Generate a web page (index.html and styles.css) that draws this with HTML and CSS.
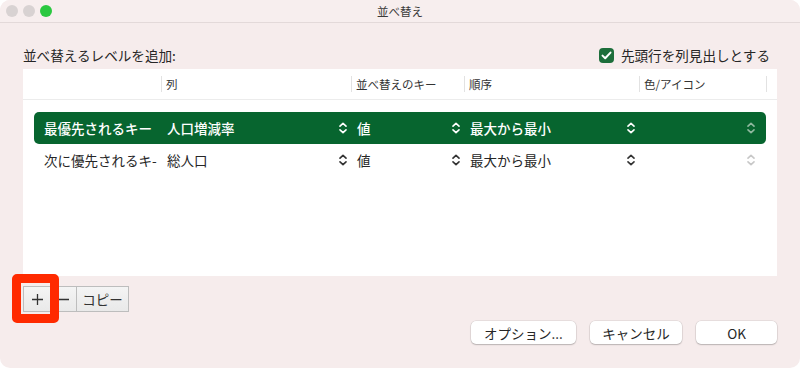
FILE: index.html
```html
<!DOCTYPE html>
<html lang="ja">
<head>
  <meta charset="UTF-8">
  <title>並べ替え</title>
  <link rel="stylesheet" href="styles.css">
</head>
<body>
  <div class="window">
    <div class="titlebar">
      <div class="lights">
        <span class="light"></span>
        <span class="light"></span>
        <span class="light green"></span>
      </div>
      <div class="title">並べ替え</div>
    </div>

    <div class="content">
      <div class="top-line">
        <span>並べ替えるレベルを追加:</span>
        <label class="check">
          <span class="box">
            <svg width="11" height="9" viewBox="0 0 11 9"><path d="M1.5 4.6 L4.2 7.2 L9.5 1.6" fill="none" stroke="#fff" stroke-width="2" stroke-linecap="round" stroke-linejoin="round"/></svg>
          </span>
          先頭行を列見出しとする
        </label>
      </div>

      <div class="panel">
        <div class="head">
          <div class="hcell first"></div>
          <div class="hcell">列</div>
          <div class="hcell">並べ替えのキー</div>
          <div class="hcell">順序</div>
          <div class="hcell">色/アイコン</div>
          <div class="hcell last"></div>
        </div>

        <div class="rows">
          <div class="row selected">
            <div class="cell label">最優先されるキー</div>
            <div class="cell">人口増減率<span class="chev"></span></div>
            <div class="cell">値<span class="chev"></span></div>
            <div class="cell">最大から最小<span class="chev"></span></div>
            <div class="cell color"><span class="chev faded"></span></div>
          </div>
          <div class="row">
            <div class="cell label">次に優先されるキ-</div>
            <div class="cell">総人口<span class="chev"></span></div>
            <div class="cell">値<span class="chev"></span></div>
            <div class="cell">最大から最小<span class="chev"></span></div>
            <div class="cell color"><span class="chev faded"></span></div>
          </div>
        </div>
      </div>

      <div class="tools">
        <button class="tool plus" aria-label="+">
          <svg width="13" height="13" viewBox="0 0 13 13"><path d="M6.5 1 V12 M1 6.5 H12" stroke="#333" stroke-width="1.3"/></svg>
        </button>
        <button class="tool minus" aria-label="−">
          <svg width="12" height="13" viewBox="0 0 12 13"><path d="M1 6.5 H11" stroke="#333" stroke-width="1.3"/></svg>
        </button>
        <button class="tool copy">コピー</button>
        <span class="highlight"></span>
      </div>

      <div class="actions">
        <button class="btn">オプション...</button>
        <button class="btn">キャンセル</button>
        <button class="btn ok">OK</button>
      </div>
    </div>
  </div>

  <script>
    // 上下シェブロンを各セルに描く
    document.querySelectorAll('.chev').forEach(function (el) {
      el.innerHTML = '<svg width="8" height="12" viewBox="0 0 8 12"><path d="M1 4.2 L4 1.3 L7 4.2 M1 7.8 L4 10.7 L7 7.8" fill="none" stroke="currentColor" stroke-width="1.6" stroke-linecap="round" stroke-linejoin="round"/></svg>';
    });
  </script>
</body>
</html>
```

FILE: styles.css
```css
:root {
  --win-bg: #f6ecec;
  --title-bg: #f7eeee;
  --green: #07652f;
  --text: #262626;
  --font: "Noto Sans CJK JP", "Noto Sans", "Liberation Sans", sans-serif;
}

html, body {
  margin: 0;
  padding: 0;
  background: #ffffff;
}

body {
  font-family: var(--font);
  color: var(--text);
  font-size: 13.5px;
}

.window {
  width: 800px;
  height: 368px;
  background: var(--win-bg);
  border-radius: 10px;
  overflow: hidden;
  position: relative;
}

.titlebar {
  height: 22px;
  background: var(--title-bg);
  border-bottom: 1px solid #e3d9d9;
  display: flex;
  align-items: center;
  position: relative;
}

.lights {
  display: flex;
  gap: 5px;
  padding-left: 6px;
}

.light {
  width: 12px;
  height: 12px;
  border-radius: 50%;
  background: #d8d2d2;
}

.light.green {
  background: #2bc840;
}

.title {
  position: absolute;
  left: 0;
  right: 0;
  text-align: center;
  font-size: 11.5px;
  color: #3a3a3a;
  line-height: 22px;
}

.content {
  padding: 21px 23px 0 23px;
}

.top-line {
  display: flex;
  justify-content: space-between;
  align-items: center;
  height: 22px;
  padding-right: 7px;
  font-size: 13.6px;
}

.check {
  display: flex;
  align-items: center;
  gap: 7px;
}

.box {
  width: 15px;
  height: 15px;
  border-radius: 4px;
  background: #1d6e3b;
  display: flex;
  align-items: center;
  justify-content: center;
}

.panel {
  margin-top: 3px;
  background: #ffffff;
  height: 207px;
}

.head {
  display: grid;
  grid-template-columns: 138px 190px 113px 175px 127px 1fr;
  height: 30px;
  border-bottom: 1px solid #ececec;
  font-size: 11.5px;
  color: #333;
}

.hcell {
  display: flex;
  align-items: center;
  padding-left: 4px;
  margin: 7px 0;
  border-left: 1px solid #e2e2e2;
}

.hcell.first {
  border-left: none;
}

.rows {
  padding: 12px 11px 0 11px;
}

.row {
  display: grid;
  grid-template-columns: 127px 190px 113px 175px 127px;
  height: 32px;
  align-items: center;
  border-radius: 5px;
}

.row.selected {
  background: var(--green);
  color: #ffffff;
  font-weight: 500;
}

.cell {
  display: flex;
  align-items: center;
  justify-content: space-between;
  padding: 0 4px 0 6px;
  white-space: nowrap;
}

.cell.label {
  padding-left: 10px;
}

.cell.color {
  justify-content: flex-end;
  padding-right: 11px;
}

.chev {
  display: flex;
  color: #333;
}

.row.selected .chev {
  color: #ffffff;
}

.row .chev.faded {
  color: #c8c8c8;
}

.row.selected .chev.faded {
  color: #8fb89e;
}

.tools {
  display: flex;
  margin-top: 10px;
  position: relative;
}

.tool {
  height: 26px;
  border: 1px solid #bdbdbd;
  background: linear-gradient(#f4f4f4, #e9e9e9);
  font-family: var(--font);
  font-size: 13.5px;
  color: #333;
  padding: 0;
  margin: 0 -1px 0 0;
  display: flex;
  align-items: center;
  justify-content: center;
}

.tool.plus {
  width: 28px;
}

.tool.minus {
  width: 27px;
}

.tool.copy {
  width: 53px;
}

.highlight {
  position: absolute;
  left: -11px;
  top: -12px;
  width: 29px;
  height: 31px;
  border: 9px solid #ff2a00;
  border-radius: 5px;
}

.actions {
  display: flex;
  justify-content: flex-end;
  gap: 14px;
  margin-top: 9px;
}

.btn {
  height: 23px;
  background: #ffffff;
  border: none;
  border-radius: 5px;
  box-shadow: 0 0 0 0.5px rgba(0,0,0,0.12), 0 1px 1.5px rgba(0,0,0,0.2);
  font-family: var(--font);
  font-size: 13.5px;
  color: #262626;
  padding: 0;
  width: 105px;
}

.btn:nth-child(2) {
  width: 92px;
}

.btn.ok {
  width: 81px;
}
```
